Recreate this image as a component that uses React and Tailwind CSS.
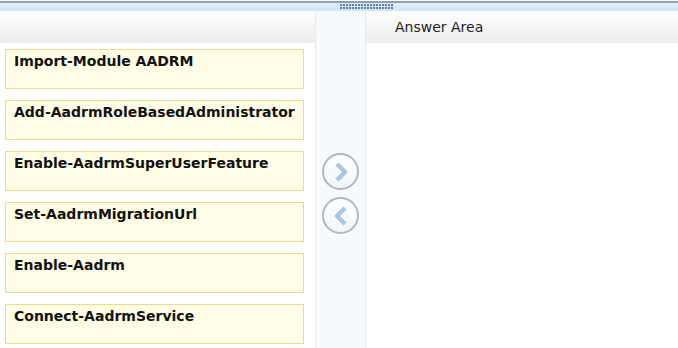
const items = [
  'Import-Module AADRM',
  'Add-AadrmRoleBasedAdministrator',
  'Enable-AadrmSuperUserFeature',
  'Set-AadrmMigrationUrl',
  'Enable-Aadrm',
  'Connect-AadrmService',
];

function Grip() {
  const dots = [];
  for (let i = 0; i < 18; i++) {
    dots.push(<rect key={'a' + i} x={i * 3} y={0} width="2" height="2" fill="#5a7fae" />);
    dots.push(<rect key={'b' + i} x={i * 3} y={3} width="2" height="2" fill="#5a7fae" />);
  }
  return (
    <svg width="54" height="5" className="ml-[340px] mt-[1px]">
      {dots}
    </svg>
  );
}

function ArrowButton({ dir }) {
  return (
    <div className="flex h-[37px] w-[37px] items-center justify-center rounded-full border-2 border-[#b4b7bb] bg-gradient-to-b from-white to-[#f1f4f7]">
      <svg width="16" height="20" viewBox="0 0 16 20">
        <path
          d={dir === 'right' ? 'M4 2 L12 10 L4 18' : 'M12 2 L4 10 L12 18'}
          fill="none"
          stroke="#a9c6e4"
          strokeWidth="4.5"
          strokeLinejoin="round"
        />
      </svg>
    </div>
  );
}

export default function App() {
  return (
    <div className="flex h-[348px] w-[678px] flex-col overflow-hidden bg-white font-['DejaVu_Sans',sans-serif]">
      <div className="mt-[1px] h-[10px] border-t-2 border-[#8c9fb6] bg-gradient-to-b from-[#e4f0fc] to-[#cfe3f7]">
        <Grip />
      </div>
      <div className="flex flex-1">
        <div className="flex w-[315px] flex-col">
          <div className="h-[32px] bg-gradient-to-b from-white to-[#ececec]" />
          <div className="flex flex-col gap-[11px] px-[5px] pt-[6px]">
            {items.map((t) => (
              <div
                key={t}
                className="h-[40px] w-[299px] border border-[#efd98a] bg-[#fffde6] pl-[8px] pt-[2px] text-[14px] font-bold leading-[18px] text-[#111]"
              >
                {t}
              </div>
            ))}
          </div>
        </div>
        <div className="flex w-[51px] flex-col items-center gap-[7px] border-x border-[#e2edf8] bg-[#f6fafe] pt-[142px]">
          <ArrowButton dir="right" />
          <ArrowButton dir="left" />
        </div>
        <div className="flex flex-1 flex-col">
          <div className="flex h-[32px] items-center bg-gradient-to-b from-white to-[#ededed] pl-[29px] text-[14px] text-[#222]">
            Answer Area
          </div>
        </div>
      </div>
    </div>
  );
}
